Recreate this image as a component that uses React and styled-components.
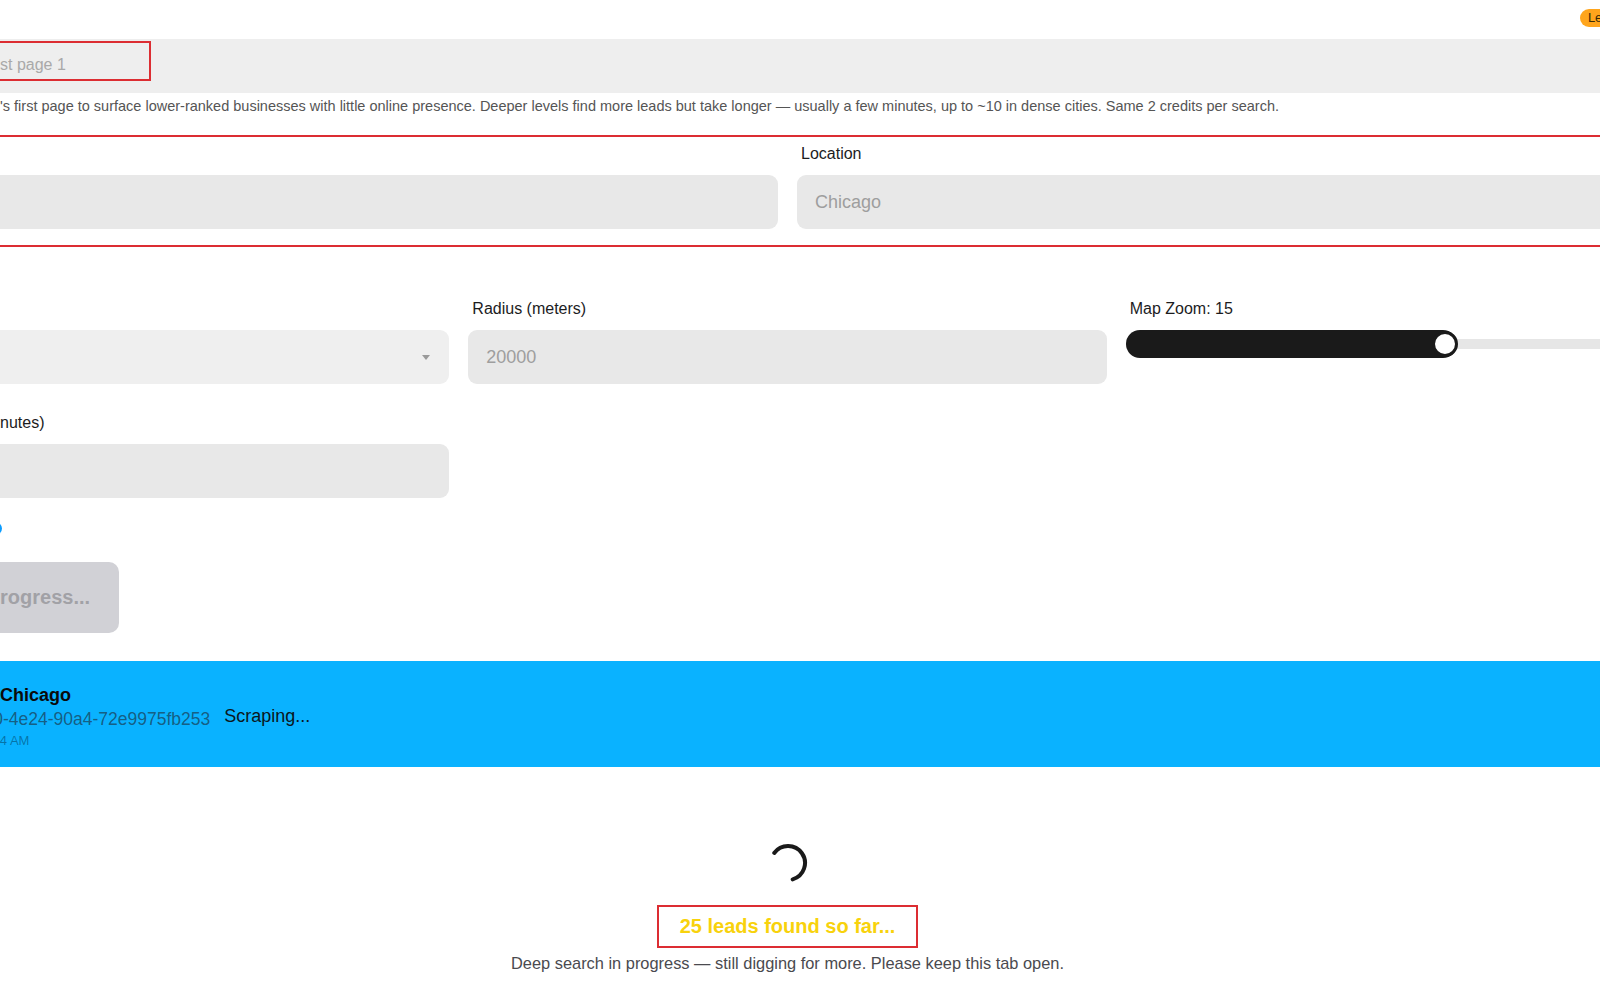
import styled, { createGlobalStyle } from "styled-components";

const ZOOM = 15;
const ZOOM_MIN = 1;
const ZOOM_MAX = 28;

const GlobalStyle = createGlobalStyle`
  html, body {
    margin: 0;
    padding: 0;
    background: #ffffff;
    overflow: hidden;
  }

  body {
    font-family: "Liberation Sans", Arial, Helvetica, sans-serif;
    color: #1c1c1e;
  }

  * {
    box-sizing: border-box;
  }
`;

// the page is wider than the window and scrolled a little to the right
const Page = styled.div`
  width: 1953px;
  margin-left: -189px;
`;

// holds the start of a line that sits left of the window edge
const Cut = styled.span`
  display: inline-flex;
  justify-content: flex-end;
  width: ${({ $w }) => $w}px;
  overflow: hidden;
  white-space: nowrap;
  vertical-align: top;
`;

const Header = styled.header`
  display: flex;
  justify-content: flex-end;
  height: 39px;
  padding: 9px 111px 0 0;
`;

const Badge = styled.span`
  height: 18px;
  line-height: 18px;
  padding: 0 8px;
  border-radius: 9px;
  background: #ffa51c;
  color: #3b2a05;
  font-size: 13px;
`;

const DepthSelect = styled.div`
  display: flex;
  align-items: flex-start;
  height: 54px;
  padding: 2px 18px;
  background: #eeeeee;
`;

const Highlight = styled.span`
  display: inline-flex;
  align-items: center;
  height: 40px;
  padding: 8px 83px 0 0;
  border: 2px solid #dc2d32;
  font-size: 16px;
  color: #a9a9a9;
  white-space: nowrap;
`;

const Help = styled.p`
  margin: 5px 0 0;
  font-size: 14.5px;
  line-height: 17px;
  color: #555555;
  white-space: nowrap;
`;

const OutlinedRow = styled.section`
  display: grid;
  grid-template-columns: 1fr 1fr;
  column-gap: 19px;
  margin-top: 20px;
  padding: 8px 0 16px;
  border: 2px solid #dc2d32;
`;

const Grid = styled.div`
  display: grid;
  grid-template-columns: repeat(3, 1fr);
  column-gap: 19px;
  row-gap: 30px;
  margin-top: 53px;
`;

const Field = styled.div`
  display: flex;
  flex-direction: column;
`;

const Label = styled.label`
  margin-bottom: 12px;
  padding-left: 4px;
  font-size: 16px;
  font-weight: 500;
  line-height: 18px;
  color: #1c1c1e;
  white-space: nowrap;
`;

const TextInput = styled.input`
  height: 54px;
  padding: 0 18px;
  border: none;
  border-radius: 9px;
  outline: none;
  background: #e8e8e8;
  font-family: inherit;
  font-size: 18px;
  color: #1c1c1e;

  &::placeholder {
    color: #9e9e9e;
  }
`;

const SelectBox = styled.div`
  display: flex;
  align-items: center;
  justify-content: flex-end;
  height: 54px;
  padding: 0 19px;
  border-radius: 9px;
  background: #efefef;
`;

const Caret = styled.span`
  width: 0;
  height: 0;
  border-left: 4px solid transparent;
  border-right: 4px solid transparent;
  border-top: 5px solid #9a9a9a;
`;

const Slider = styled.div`
  position: relative;
  display: flex;
  align-items: center;
  height: 28px;
`;

const Rail = styled.div`
  flex: 1;
  height: 10px;
  border-radius: 5px;
  background: #e6e6e6;
`;

const Fill = styled.div`
  position: absolute;
  left: 0;
  top: 0;
  height: 28px;
  border-radius: 14px;
  background: #1a1a1a;
`;

const Thumb = styled.div`
  position: absolute;
  right: -1px;
  top: 1px;
  width: 26px;
  height: 26px;
  border-radius: 50%;
  border: 3px solid #1a1a1a;
  background: #ffffff;
`;

const ToggleRow = styled.div`
  display: flex;
  align-items: center;
  height: 13px;
  margin-top: 24px;
  font-size: 13px;
  line-height: 13px;
`;

const Dot = styled.span`
  width: 13px;
  height: 13px;
  border-radius: 50%;
  background: #0a9cff;
`;

const SubmitButton = styled.button`
  display: block;
  height: 71px;
  margin-top: 27px;
  padding: 0 29px;
  border: none;
  border-radius: 10px;
  background: #d1d1d6;
  color: #a1a1a6;
  font-family: inherit;
  font-size: 20px;
  font-weight: 700;
`;

const JobBand = styled.div`
  display: flex;
  align-items: center;
  gap: 14px;
  height: 106px;
  margin-top: 28px;
  padding: 23px 24px 18px;
  background: #0ab2ff;
`;

const JobInfo = styled.div`
  display: flex;
  flex-direction: column;
`;

const JobTitle = styled.div`
  font-size: 18px;
  font-weight: 700;
  line-height: 22px;
  color: #0a0a0a;
  white-space: nowrap;
`;

const JobId = styled.div`
  margin-top: 3px;
  font-size: 17.5px;
  line-height: 20px;
  color: rgba(30, 40, 50, 0.62);
  white-space: nowrap;
`;

const JobTime = styled.div`
  margin-top: 4px;
  font-size: 13px;
  line-height: 16px;
  color: rgba(0, 0, 0, 0.36);
  white-space: nowrap;
`;

const JobStatus = styled.span`
  font-size: 18px;
  color: #0b1620;
`;

const Progress = styled.section`
  display: flex;
  flex-direction: column;
  align-items: center;
  margin-top: 76px;
`;

const Spinner = styled.svg`
  width: 40px;
  height: 40px;
`;

const CountBox = styled.div`
  height: 43px;
  margin-top: 22px;
  padding: 0 21px;
  border: 2px solid #dc2d32;
  font-size: 20px;
  font-weight: 700;
  line-height: 39px;
  color: #f8d20c;
`;

const Note = styled.p`
  margin: 6px 0 0;
  font-size: 16.4px;
  line-height: 19px;
  color: #4a4a4f;
`;

const App = () => {
  const zoomPct = ((ZOOM - ZOOM_MIN) / (ZOOM_MAX - ZOOM_MIN)) * 100;

  return (
    <>
      <GlobalStyle />
      <Page>
        <Header>
          <Badge>Leads: 25</Badge>
        </Header>

        <DepthSelect>
          <Highlight>
            <Cut $w={169}>Level 2 — Pa</Cut>st page 1
          </Highlight>
        </DepthSelect>
        <Help>
          <Cut $w={189}>Digs past Google Maps</Cut>'s first page to surface lower-ranked businesses with
          little online presence. Deeper levels find more leads but take longer — usually a few
          minutes, up to ~10 in dense cities. Same 2 credits per search.
        </Help>

        <OutlinedRow>
          <Field>
            <Label>Business Type</Label>
            <TextInput placeholder="" readOnly />
          </Field>
          <Field>
            <Label>Location</Label>
            <TextInput placeholder="Chicago" readOnly />
          </Field>
        </OutlinedRow>

        <Grid>
          <Field>
            <Label>Category</Label>
            <SelectBox>
              <Caret />
            </SelectBox>
          </Field>
          <Field>
            <Label>Radius (meters)</Label>
            <TextInput placeholder="20000" readOnly />
          </Field>
          <Field>
            <Label>Map Zoom: {ZOOM}</Label>
            <Slider>
              <Rail />
              <Fill style={{ width: `${zoomPct}%` }}>
                <Thumb />
              </Fill>
            </Slider>
          </Field>
          <Field>
            <Label>
              <Cut $w={185}>Max wait (mi</Cut>nutes)
            </Label>
            <TextInput readOnly />
          </Field>
        </Grid>

        <ToggleRow>
          <Cut $w={178}>Deep search</Cut>
          <Dot />
        </ToggleRow>

        <SubmitButton disabled>Deep search in progress...</SubmitButton>

        <JobBand>
          <JobInfo>
            <JobTitle>
              <Cut $w={160}>Plumbers in</Cut> Chicago
            </JobTitle>
            <JobId>
              <Cut $w={168}>8f3b21c4-7d10</Cut>-4e24-90a4-72e9975fb253
            </JobId>
            <JobTime>
              <Cut $w={172}>3/12/2025, 10:12:14</Cut> AM
            </JobTime>
          </JobInfo>
          <JobStatus>Scraping...</JobStatus>
        </JobBand>

        <Progress>
          <Spinner viewBox="0 0 40 40">
            <path
              d="M6.25 10 A17 17 0 1 1 24.69 36.34"
              fill="none"
              stroke="#1a1a1a"
              strokeWidth="4"
              strokeLinecap="round"
            />
          </Spinner>
          <CountBox>25 leads found so far...</CountBox>
          <Note>Deep search in progress — still digging for more. Please keep this tab open.</Note>
        </Progress>
      </Page>
    </>
  );
};

export default App;
